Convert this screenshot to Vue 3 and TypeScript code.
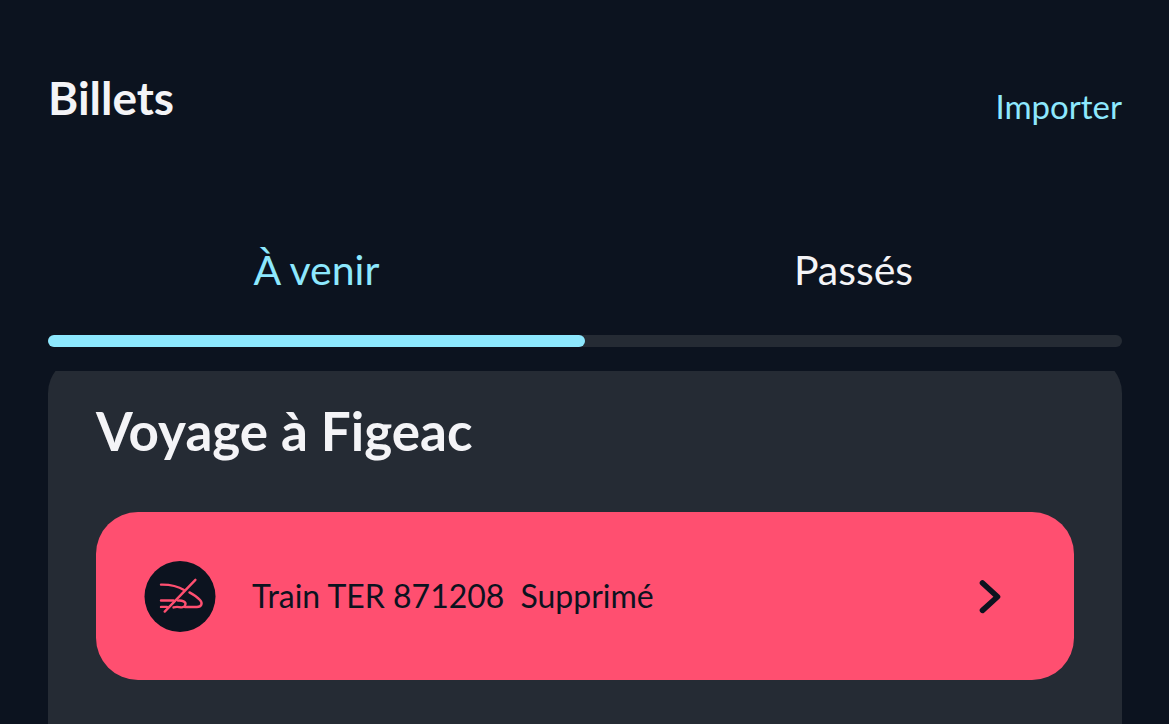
<script setup lang="ts">
import { ref } from 'vue'

type Tab = 'upcoming' | 'past'
const active = ref<Tab>('upcoming')
const tabs: { id: Tab; label: string }[] = [
  { id: 'upcoming', label: 'À venir' },
  { id: 'past', label: 'Passés' },
]
</script>

<template>
  <main class="page">
    <header class="top">
      <h1>Billets</h1>
      <a class="import" href="#">Importer</a>
    </header>

    <nav class="tabs" aria-label="Billets">
      <button
        v-for="tab in tabs"
        :key="tab.id"
        type="button"
        class="tab"
        :class="{ active: active === tab.id }"
        @click="active = tab.id"
      >
        {{ tab.label }}
      </button>
    </nav>
    <div class="track"><div class="bar" :class="active"></div></div>

    <div class="list">
      <section class="trip">
        <h2>Voyage à Figeac</h2>
        <button type="button" class="alert">
          <svg class="badge" viewBox="0 0 72 72" aria-hidden="true">
            <circle cx="36" cy="36.5" r="35.5" fill="#0c131f" />
            <g fill="none" stroke="#ff4f70" stroke-width="2.4" stroke-linecap="round" stroke-linejoin="round">
              <path d="M17 24.6C27 24.4 34 26.3 40.5 30.2" />
              <path d="M45.5 32.4C50 34.8 53.5 37.2 56 40C59 43.4 57.5 47 53 47H41" />
              <path d="M17 40.5H29.5M17 46.9H23" />
              <path d="M34 40.6C38.5 40.2 41.8 42 41.5 44.2C41.2 46.2 39 47.6 37 47.4C34 46.6 32 46.6 29.5 47.4" />
              <path d="M51.4 19.8L20.7 51.6" />
            </g>
          </svg>
          <span class="train">Train TER 871208</span>
          <span class="status">Supprimé</span>
          <svg class="chevron" viewBox="0 0 24 36" aria-hidden="true">
            <path d="M4.5 5L19.5 18.7L4.5 32.4" fill="none" stroke="#0c131f" stroke-width="5.6" stroke-linecap="round" stroke-linejoin="round" />
          </svg>
        </button>
      </section>
    </div>
  </main>
</template>

<style>
body {
  background: #0c131f;
}
</style>

<style scoped>
.page {
  box-sizing: border-box;
  height: 100vh;
  overflow: hidden;
  padding: 70px 47px 0 48px;
  display: flex;
  flex-direction: column;
  background: #0c131f;
  color: #f4f4f7;
  font-family: Lato, "Open Sans", sans-serif;
}
.top {
  display: flex;
  justify-content: space-between;
}
h1,
h2 {
  margin: 0;
  font-weight: 700;
}
h1 {
  font-size: 46px;
  line-height: 56px;
}
.import {
  padding-top: 16px;
  color: #8de8fe;
  font-size: 33px;
  line-height: 40px;
  text-decoration: none;
}
button {
  border: 0;
  font-family: inherit;
  cursor: pointer;
}
.tabs {
  display: flex;
  padding-top: 100px;
}
.tab {
  flex: 1;
  padding: 20px 0 41px;
  background: none;
  color: inherit;
  font-size: 41px;
  line-height: 48px;
}
.tab.active {
  color: #8de8fe;
}
.track {
  flex: none;
  height: 12px;
  margin-bottom: 24px;
  border-radius: 6px;
  background: #252b34;
}
.bar {
  width: 50%;
  height: 100%;
  border-radius: 6px;
  background: #8de8fe;
}
.bar.past {
  margin-left: 50%;
}
.list {
  flex: 1;
  display: flex;
  flex-direction: column;
  overflow: hidden;
}
.trip {
  flex: 1;
  margin-top: -14px;
  padding: 44px 48px 32px;
  border-radius: 36px 36px 0 0;
  background: #252b34;
}
h2 {
  font-size: 53px;
  line-height: 60px;
}
.alert {
  display: flex;
  align-items: center;
  width: 100%;
  margin-top: 51px;
  padding: 48px 72px 48px 48px;
  border-radius: 42px;
  background: #ff4f70;
  color: #0c131f;
  font-size: 32px;
  line-height: 40px;
}
.badge {
  width: 72px;
  height: 72px;
  margin-right: 36px;
}
.status {
  margin-left: 16px;
}
.chevron {
  width: 24px;
  height: 36px;
  margin-left: auto;
}
</style>
